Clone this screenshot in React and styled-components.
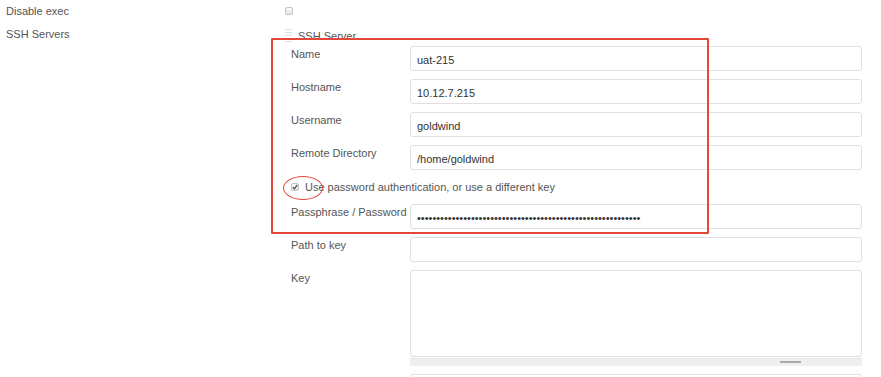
import React from 'react'
import styled, { createGlobalStyle } from 'styled-components'

const Global = createGlobalStyle`
  body {
    margin: 0;
    background: #fff;
    font-family: "Liberation Sans", Arial, sans-serif;
    font-size: 11px;
    color: #555;
  }
`

const Page = styled.div`
  position: relative;
  width: 881px;
  height: 377px;
  overflow: hidden;
`

const FieldRow = styled.div`
  display: grid;
  grid-template-columns: 280px 1fr;
`

const SideLabel = styled.div`
  padding: ${p => p.$top || 0}px 0 0 6px;
  line-height: 22px;
  color: #555;
`

const Control = styled.div`
  padding-left: 5px;
`

const Box = styled.span`
  display: inline-flex;
  align-items: center;
  justify-content: center;
  box-sizing: border-box;
  width: 8px;
  height: 8px;
  margin-top: ${p => p.$top || 0}px;
  border: 1px solid #c4c4c4;
  border-radius: 2px;
  background: linear-gradient(#fafafa, #e4e4e4);
  svg {
    display: block;
  }
`

const ServerBlock = styled.div`
  padding-top: 7px;
`

const BlockHeader = styled.div`
  display: flex;
  align-items: center;
  gap: 6px;
  height: 14px;
  margin-bottom: 3px;
  color: #555;
`

const Handle = styled.span`
  width: 7px;
  height: 14px;
  background: repeating-linear-gradient(#dedede 0 1px, transparent 1px 3px);
`

const Rows = styled.div`
  padding-left: 6px;
`

const Row = styled.div`
  display: grid;
  grid-template-columns: 119px 452px;
  margin-bottom: 8px;
`

const RowLabel = styled.div`
  line-height: 16px;
  color: #555;
  white-space: nowrap;
`

const TextInput = styled.input`
  box-sizing: border-box;
  width: 100%;
  height: 25px;
  padding: 4px 6px 2px;
  border: 1px solid #e0e0e0;
  border-radius: 3px;
  background: #fff;
  font-family: "Liberation Sans", Arial, sans-serif;
  font-size: 11px;
  color: #333;
  outline: none;
`

const KeyArea = styled.div`
  display: flex;
  flex-direction: column;
`

const TextArea = styled.textarea`
  box-sizing: border-box;
  width: 100%;
  height: 87px;
  border: 1px solid #e0e0e0;
  border-radius: 3px;
  background: #fff;
  resize: none;
  outline: none;
  display: block;
`

const ScrollBar = styled.div`
  position: relative;
  height: 7px;
  margin-top: 1px;
  background: #efefef;
  border-top: 1px solid #e6e6e6;
  span {
    position: absolute;
    left: 370px;
    top: 2px;
    width: 21px;
    height: 2px;
    background: #a8a8a8;
  }
`

const CheckRow = styled.div`
  display: flex;
  align-items: center;
  gap: 6px;
  height: 18px;
  margin-bottom: 8px;
  color: #555;
`

const Annotation = styled.div`
  position: absolute;
  box-sizing: border-box;
  left: ${p => p.$x}px;
  top: ${p => p.$y}px;
  width: ${p => p.$w}px;
  height: ${p => p.$h}px;
  border: ${p => p.$round ? '1.5px' : '2px'} solid #e2483a;
  border-radius: ${p => p.$round ? '50%' : '1px'};
  pointer-events: none;
`

const fields = [
  ['Name', 'uat-215'],
  ['Hostname', '10.12.7.215'],
  ['Username', 'goldwind'],
  ['Remote Directory', '/home/goldwind'],
]

function Field({ label, value, type }) {
  return (
    <Row>
      <RowLabel>{label}</RowLabel>
      <TextInput type={type || 'text'} readOnly defaultValue={value} />
    </Row>
  )
}

export default function App() {
  return (
    <Page>
      <Global />
      <FieldRow>
        <SideLabel>Disable exec</SideLabel>
        <Control>
          <Box $top={7} />
        </Control>
      </FieldRow>
      <FieldRow>
        <SideLabel $top={1}>SSH Servers</SideLabel>
        <Control>
          <ServerBlock>
            <BlockHeader>
              <Handle />
              <span>SSH Server</span>
            </BlockHeader>
            <Rows>
              {fields.map(([l, v]) => (
                <Field key={l} label={l} value={v} />
              ))}
              <CheckRow>
                <Box>
                  <svg width="6" height="6" viewBox="0 0 6 6">
                    <path d="M0.8 3.2 L2.4 4.8 L5.2 1" fill="none" stroke="#555" strokeWidth="1.3" />
                  </svg>
                </Box>
                <span>Use password authentication, or use a different key</span>
              </CheckRow>
              <Field label="Passphrase / Password" type="password" value={'x'.repeat(58)} />
              <Field label="Path to key" value="" />
              <Row>
                <RowLabel>Key</RowLabel>
                <KeyArea>
                  <TextArea readOnly />
                  <ScrollBar><span /></ScrollBar>
                </KeyArea>
              </Row>
              <Field label="Jump host" value="" />
            </Rows>
          </ServerBlock>
        </Control>
      </FieldRow>
      <Annotation $x={271} $y={38} $w={438} $h={196} />
      <Annotation $round $x={283} $y={176} $w={40} $h={24} />
    </Page>
  )
}
